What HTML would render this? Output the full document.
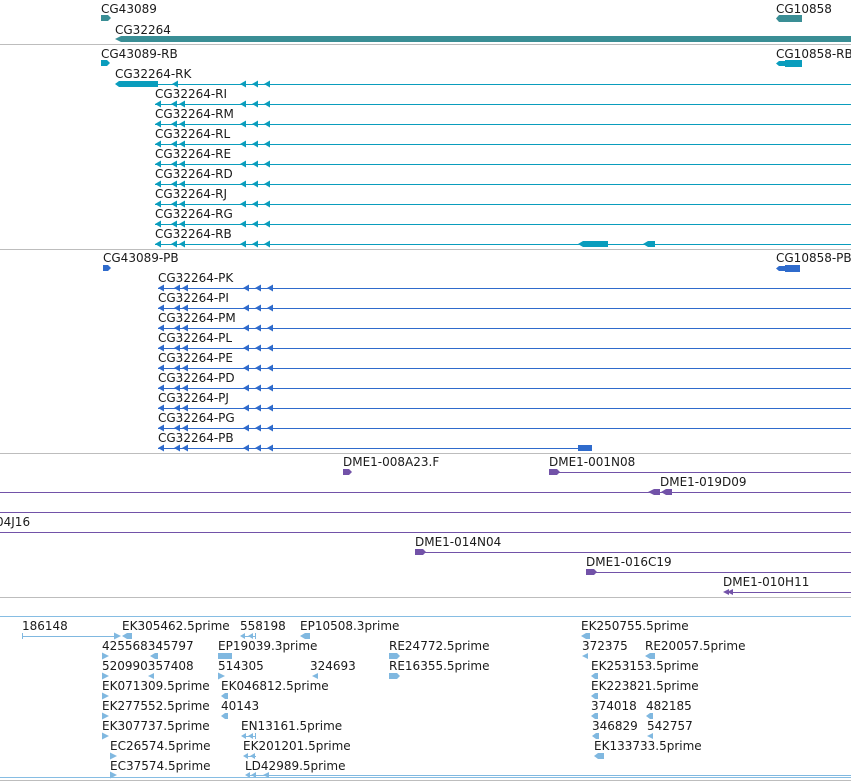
<!DOCTYPE html>
<html><head><meta charset="utf-8"><style>
html,body{margin:0;padding:0;background:#fff;width:851px;height:781px;overflow:hidden}
svg{display:block}
text{font-family:"DejaVu Sans","Liberation Sans",sans-serif;font-size:12px;fill:#1a1a1a}
line{shape-rendering:crispEdges}
</style></head><body>
<svg width="851" height="781" viewBox="0 0 851 781" xmlns="http://www.w3.org/2000/svg">
<defs>
<polygon id="la" points="0,0 6,-3.5 6,3.5"/>
<polygon id="ra" points="7,0 0,-3.5 0,3.5"/>
</defs>
<g stroke-width="1">
<line x1="0" y1="44.5" x2="851" y2="44.5" stroke="#bdbdbd"/>
<line x1="0" y1="249.5" x2="851" y2="249.5" stroke="#bdbdbd"/>
<line x1="0" y1="453.5" x2="851" y2="453.5" stroke="#bdbdbd"/>
<line x1="0" y1="597.5" x2="851" y2="597.5" stroke="#bdbdbd"/>
<line x1="0" y1="616.5" x2="851" y2="616.5" stroke="#86bde3"/>
<line x1="0" y1="777.5" x2="851" y2="777.5" stroke="#86bde3"/>
<line x1="0" y1="780.5" x2="851" y2="780.5" stroke="#bdbdbd"/>
</g>
<text x="101" y="13">CG43089</text>
<polygon points="101,15 108,15 111,18 108,21 101,21" fill="#3a8e95"/>
<text x="115" y="34">CG32264</text>
<polygon points="121,36 851,36 851,42 121,42 115,39" fill="#3a8e95"/>
<text x="776" y="13">CG10858</text>
<polygon points="779,15 802,15 802,22 779,22 776,18.5" fill="#3a8e95"/>

<g fill="#0a9dbd">
<polygon points="101,60 107,60 110,63 107,66 101,66" />
<polygon points="779,61 785,61 785,60 802,60 802,67 785,67 785,66 779,66 776,63.5"/>
<polygon points="119,81 158,81 158,87 119,87 115,84"/>
<line x1="158" y1="84.5" x2="851" y2="84.5" stroke="#0a9dbd" stroke-width="1"/>
<use href="#la" x="172" y="84"/><use href="#la" x="240" y="84"/><use href="#la" x="252" y="84"/><use href="#la" x="264" y="84"/>
</g>
<g fill="#0a9dbd" stroke="#0a9dbd" stroke-width="1">
<g id="rrow"><line x1="155" y1="104.5" x2="851" y2="104.5"/>
<use href="#la" x="155" y="104" stroke="none"/><use href="#la" x="171" y="104" stroke="none"/><use href="#la" x="179" y="104" stroke="none"/><use href="#la" x="240" y="104" stroke="none"/><use href="#la" x="252" y="104" stroke="none"/><use href="#la" x="264" y="104" stroke="none"/></g>
<use href="#rrow" y="20"/><use href="#rrow" y="40"/><use href="#rrow" y="60"/><use href="#rrow" y="80"/><use href="#rrow" y="100"/><use href="#rrow" y="120"/><use href="#rrow" y="140"/>
<polygon points="583,241 608,241 608,247 583,247 578,244" stroke="none"/>
<polygon points="648,241 655,241 655,247 648,247 643,244" stroke="none"/>
</g>
<text x="155" y="98">CG32264-RI</text>
<text x="155" y="118">CG32264-RM</text>
<text x="155" y="138">CG32264-RL</text>
<text x="155" y="158">CG32264-RE</text>
<text x="155" y="178">CG32264-RD</text>
<text x="155" y="198">CG32264-RJ</text>
<text x="155" y="218">CG32264-RG</text>
<text x="155" y="238">CG32264-RB</text>
<text x="101" y="58">CG43089-RB</text>
<text x="776" y="58">CG10858-RB</text>
<text x="115" y="78">CG32264-RK</text>

<text x="103" y="262">CG43089-PB</text>
<polygon points="103,265 108,265 111,268 108,271 103,271" fill="#2f6bcc"/>
<text x="776" y="262">CG10858-PB</text>
<polygon points="779,266 785,266 785,265 800,265 800,272 785,272 785,271 779,271 776,268.5" fill="#2f6bcc"/>
<text x="158" y="282">CG32264-PK</text>
<text x="158" y="302">CG32264-PI</text>
<text x="158" y="322">CG32264-PM</text>
<text x="158" y="342">CG32264-PL</text>
<text x="158" y="362">CG32264-PE</text>
<text x="158" y="382">CG32264-PD</text>
<text x="158" y="402">CG32264-PJ</text>
<text x="158" y="422">CG32264-PG</text>
<text x="158" y="442">CG32264-PB</text>
<g fill="#2f6bcc" stroke="#2f6bcc" stroke-width="1">
<g id="prow"><line x1="158" y1="288.5" x2="851" y2="288.5"/>
<use href="#la" x="158" y="288" stroke="none"/><use href="#la" x="174" y="288" stroke="none"/><use href="#la" x="182" y="288" stroke="none"/><use href="#la" x="243" y="288" stroke="none"/><use href="#la" x="255" y="288" stroke="none"/><use href="#la" x="267" y="288" stroke="none"/></g>
<use href="#prow" y="20"/><use href="#prow" y="40"/><use href="#prow" y="60"/><use href="#prow" y="80"/><use href="#prow" y="100"/><use href="#prow" y="120"/><use href="#prow" y="140"/>
<line x1="158" y1="448.5" x2="580" y2="448.5"/>
<use href="#la" x="158" y="448" stroke="none"/><use href="#la" x="174" y="448" stroke="none"/><use href="#la" x="182" y="448" stroke="none"/><use href="#la" x="243" y="448" stroke="none"/><use href="#la" x="255" y="448" stroke="none"/><use href="#la" x="267" y="448" stroke="none"/>
<rect x="578" y="445" width="14" height="6" stroke="none"/>
</g>

<g fill="#7252a8" stroke="#7252a8" stroke-width="1">
<polygon points="343,469 349,469 352,472 349,475 343,475" stroke="none"/>
<polygon points="549,469 557,469 560,472 557,475 549,475" stroke="none"/>
<line x1="558" y1="472.5" x2="851" y2="472.5"/>
<line x1="0" y1="492.5" x2="851" y2="492.5"/>
<polygon points="648,492 654,489 660,489 660,495 654,495" stroke="none"/>
<polygon points="661,492 666,489 672,489 672,495 666,495" stroke="none"/>
<line x1="0" y1="512.5" x2="851" y2="512.5"/>
<line x1="0" y1="532.5" x2="851" y2="532.5"/>
<polygon points="415,549 423,549 426,552 423,555 415,555" stroke="none"/>
<line x1="424" y1="552.5" x2="851" y2="552.5"/>
<polygon points="586,569 594,569 597,572 594,575 586,575" stroke="none"/>
<line x1="595" y1="572.5" x2="851" y2="572.5"/>
<line x1="726" y1="592.5" x2="851" y2="592.5"/>
<polygon points="723,592 729,589 729,595" stroke="none"/>
<polygon points="727,592 733,589 733,595" stroke="none"/>
</g>
<text x="343" y="466">DME1-008A23.F</text>
<text x="549" y="466">DME1-001N08</text>
<text x="660" y="486">DME1-019D09</text>
<text x="-4" y="526">04J16</text>
<text x="415" y="546">DME1-014N04</text>
<text x="586" y="566">DME1-016C19</text>
<text x="723" y="586">DME1-010H11</text>

<g fill="#80b8e0" stroke="#80b8e0" stroke-width="1">
<line x1="22" y1="636.5" x2="118" y2="636.5"/>
<line x1="22.5" y1="633" x2="22.5" y2="639"/>
<use href="#ra" x="114" y="636" stroke="none"/>
<polygon points="122,636 127,633 132,633 132,639 127,639" stroke="none"/>
<polygon points="240,636 245,633 245,639" stroke="none"/><line x1="243" y1="636.5" x2="255" y2="636.5"/><polygon points="248,636 253,633 253,639" stroke="none"/><line x1="255.5" y1="633" x2="255.5" y2="639"/>
<polygon points="300,636 305,633 310,633 310,639 305,639" stroke="none"/>
<polygon points="581,636 586,633 590,633 590,639 586,639" stroke="none"/>
<use href="#ra" x="102" y="656" stroke="none"/>
<polygon points="150,656 155,653 158,653 158,659 155,659" stroke="none"/>
<rect x="218" y="653" width="14" height="6" stroke="none"/>
<polygon points="389,653 397,653 400,656 397,659 389,659" stroke="none"/>
<polygon points="582,656 588,653 588,659" stroke="none"/>
<polygon points="645,656 650,653 655,653 655,659 650,659" stroke="none"/>
<use href="#ra" x="102" y="676" stroke="none"/>
<polygon points="148,676 154,673 154,679" stroke="none"/>
<use href="#ra" x="218" y="676" stroke="none"/>
<polygon points="312,676 318,673 318,679" stroke="none"/>
<polygon points="389,673 397,673 400,676 397,679 389,679" stroke="none"/>
<polygon points="591,676 595,673 598,673 598,679 595,679" stroke="none"/>
<use href="#ra" x="102" y="696" stroke="none"/>
<polygon points="221,696 225,693 228,693 228,699 225,699" stroke="none"/>
<polygon points="591,696 595,693 598,693 598,699 595,699" stroke="none"/>
<use href="#ra" x="102" y="716" stroke="none"/>
<polygon points="221,716 225,713 228,713 228,719 225,719" stroke="none"/>
<polygon points="591,716 595,713 598,713 598,719 595,719" stroke="none"/>
<polygon points="646,716 650,713 653,713 653,719 650,719" stroke="none"/>
<use href="#ra" x="102" y="736" stroke="none"/>
<polygon points="241,736 246,733 246,739" stroke="none"/><line x1="244" y1="736.5" x2="255" y2="736.5"/><polygon points="248,736 253,733 253,739" stroke="none"/><line x1="255.5" y1="733" x2="255.5" y2="739"/>
<polygon points="592,736 596,733 599,733 599,739 596,739" stroke="none"/>
<polygon points="647,736 653,733 653,739" stroke="none"/>
<use href="#ra" x="110" y="756" stroke="none"/>
<polygon points="243,756 248,753 248,759" stroke="none"/><line x1="246" y1="756.5" x2="256" y2="756.5"/><polygon points="250,756 255,753 255,759" stroke="none"/>
<polygon points="594,756 598,753 604,753 604,759 598,759" stroke="none"/>
<use href="#ra" x="110" y="775" stroke="none"/>
<polygon points="245,775 250,772 250,778" stroke="none"/><polygon points="251,775 256,772 256,778" stroke="none"/><polygon points="263,775 269,772 269,778" stroke="none"/>
<line x1="250" y1="775.5" x2="851" y2="775.5"/>
</g>
<text x="22" y="630">186148</text>
<text x="122" y="630">EK305462.5prime</text>
<text x="240" y="630">558198</text>
<text x="300" y="630">EP10508.3prime</text>
<text x="581" y="630">EK250755.5prime</text>
<text x="102" y="650">425568345797</text>
<text x="218" y="650">EP19039.3prime</text>
<text x="389" y="650">RE24772.5prime</text>
<text x="582" y="650">372375</text>
<text x="645" y="650">RE20057.5prime</text>
<text x="102" y="670">520990357408</text>
<text x="218" y="670">514305</text>
<text x="310" y="670">324693</text>
<text x="389" y="670">RE16355.5prime</text>
<text x="591" y="670">EK253153.5prime</text>
<text x="102" y="690">EK071309.5prime</text>
<text x="221" y="690">EK046812.5prime</text>
<text x="591" y="690">EK223821.5prime</text>
<text x="102" y="710">EK277552.5prime</text>
<text x="221" y="710">40143</text>
<text x="591" y="710">374018</text>
<text x="646" y="710">482185</text>
<text x="102" y="730">EK307737.5prime</text>
<text x="241" y="730">EN13161.5prime</text>
<text x="592" y="730">346829</text>
<text x="647" y="730">542757</text>
<text x="110" y="750">EC26574.5prime</text>
<text x="243" y="750">EK201201.5prime</text>
<text x="594" y="750">EK133733.5prime</text>
<text x="110" y="770">EC37574.5prime</text>
<text x="245" y="770">LD42989.5prime</text>
</svg>
</body></html>
